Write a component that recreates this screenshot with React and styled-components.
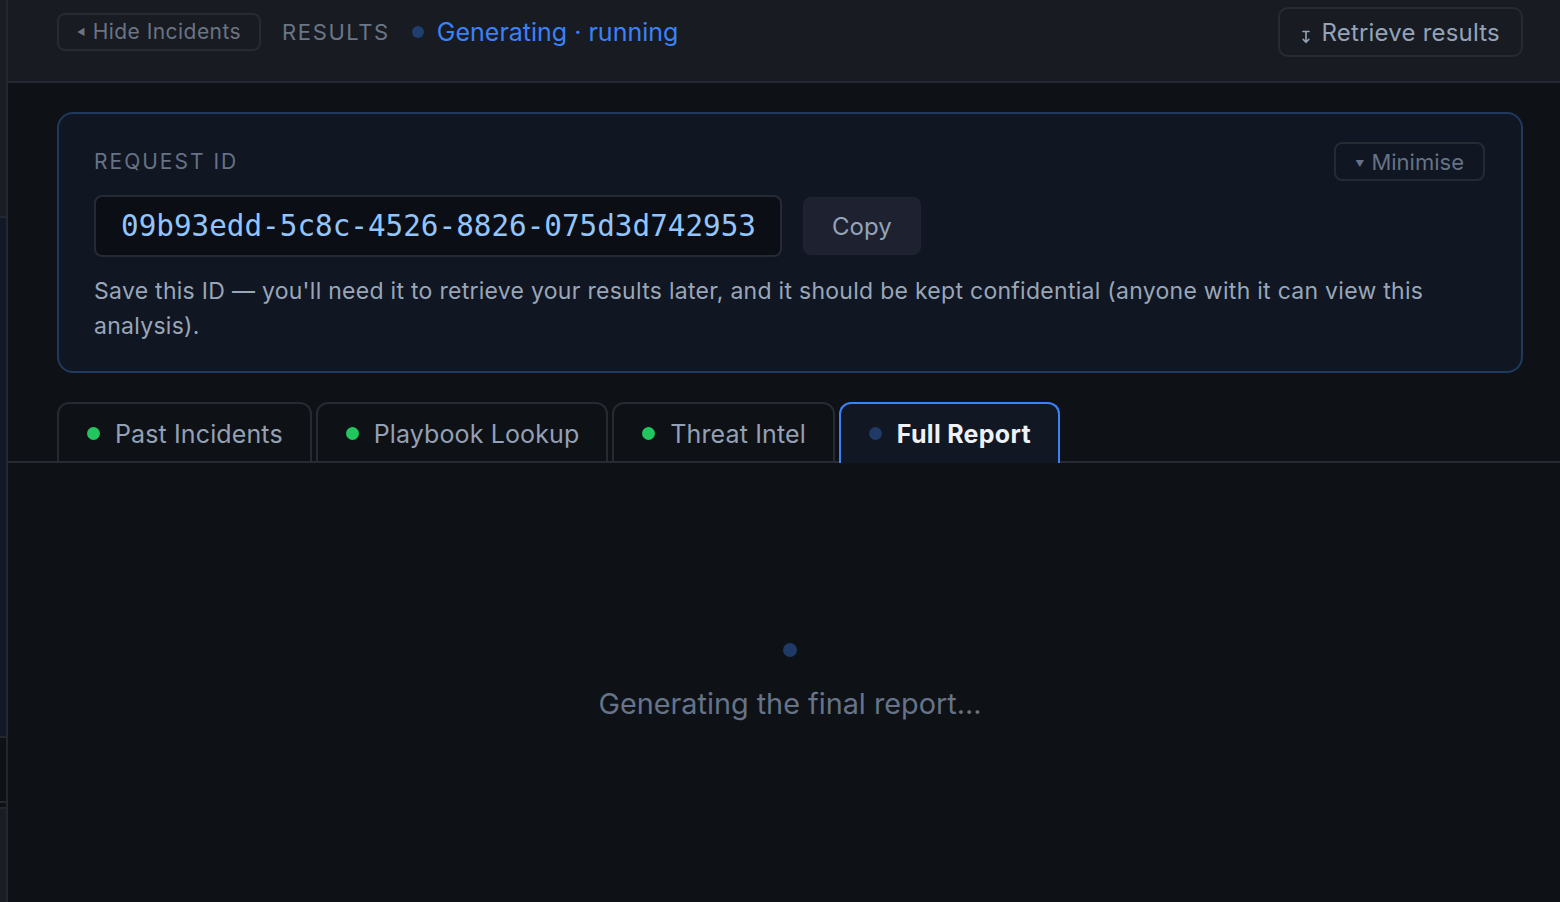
import React from 'react';
import styled, { createGlobalStyle } from 'styled-components';

const Global = createGlobalStyle`
    html, body {
        margin: 0;
        padding: 0;
        background: #0e1116;
        font-family: Inter, "Noto Sans", "Liberation Sans", sans-serif;
        -webkit-font-smoothing: antialiased;
    }
    * {
        box-sizing: border-box;
    }
`;

const Page = styled.div`
    display: flex;
    width: 1560px;
    height: 902px;
    overflow: hidden;
    background: #0e1116;
`;

const SideStrip = styled.div`
    width: 8px;
    flex-shrink: 0;
    display: flex;
    flex-direction: column;
    border-right: 2px solid #23272f;
`;

const StripBlock = styled.div`
    height: ${(p) => (p.$h ? `${p.$h}px` : 'auto')};
    flex: ${(p) => (p.$grow ? 1 : 'none')};
    background: ${(p) => p.$bg};
    border-bottom: ${(p) => (p.$line ? '2px solid #23272f' : 'none')};
`;

const Main = styled.div`
    flex: 1;
    display: flex;
    flex-direction: column;
`;

const Header = styled.header`
    height: 83px;
    display: flex;
    align-items: flex-start;
    padding: 7px 37px 0 49px;
    background: #181b22;
    border-bottom: 2px solid #262a32;
`;

const HeaderLeft = styled.div`
    display: flex;
    align-items: center;
    height: 49px;
    gap: 21px;
    flex: 1;
`;

const GhostButton = styled.button`
    display: inline-flex;
    align-items: center;
    gap: ${(p) => p.$gap || 8}px;
    height: ${(p) => p.$h}px;
    padding: 0 ${(p) => p.$px}px;
    background: transparent;
    border: 2px solid #262a33;
    border-radius: ${(p) => p.$r || 8}px;
    color: ${(p) => p.$color || '#6b7482'};
    font-family: inherit;
    font-size: ${(p) => p.$fs}px;
    letter-spacing: ${(p) => p.$ls || 0}px;
    cursor: pointer;
`;

const Caret = styled.span`
    font-size: ${(p) => p.$fs || 10}px;
    line-height: 1;
    margin-top: ${(p) => p.$dy || 0}px;
`;

const RetrieveIcon = styled.svg`
    width: 10px;
    height: 14px;
    margin-top: 9px;
    flex-shrink: 0;
`;

const ResultsLabel = styled.span`
    font-size: 22px;
    letter-spacing: 1.6px;
    color: #6b7686;
`;

const Status = styled.div`
    display: flex;
    align-items: center;
    gap: 13px;
    margin-left: 1px;
    color: #3b82f6;
    font-size: 25px;
`;

const Dot = styled.span`
    width: ${(p) => p.$size || 12}px;
    height: ${(p) => p.$size || 12}px;
    border-radius: 50%;
    background: ${(p) => p.$color};
    flex-shrink: 0;
`;

const Body = styled.div`
    flex: 1;
    display: flex;
    flex-direction: column;
    padding-top: 29px;
`;

const Card = styled.section`
    margin: 0 37px 0 49px;
    padding: 28px 36px 27px 35px;
    background: #101622;
    border: 2px solid #1f3a5e;
    border-radius: 16px;
`;

const CardTop = styled.div`
    display: flex;
    align-items: center;
    justify-content: space-between;
`;

const FieldLabel = styled.span`
    font-size: 21px;
    letter-spacing: 2px;
    color: #667285;
`;

const IdRow = styled.div`
    display: flex;
    align-items: center;
    gap: 21px;
    margin-top: 14px;
`;

const IdBox = styled.div`
    height: 62px;
    display: flex;
    align-items: center;
    padding: 0 24px 0 25px;
    background: #0b0e14;
    border: 2px solid #262a33;
    border-radius: 8px;
    font-family: "DejaVu Sans Mono", "Liberation Mono", monospace;
    font-size: 29.3px;
    color: #93c5fd;
`;

const CopyButton = styled.button`
    height: 58px;
    padding: 0 27px;
    background: #1d2130;
    border: 2px solid #1f2331;
    border-radius: 8px;
    color: #94a3b8;
    font-family: inherit;
    font-size: 24px;
    cursor: pointer;
`;

const Note = styled.p`
    margin: 17px 0 0;
    font-size: 23px;
    line-height: 35px;
    letter-spacing: 0.28px;
    color: #9aa6b8;
`;

const Tabs = styled.div`
    display: flex;
    gap: 4px;
    margin-top: 29px;
    padding: 0 37px 0 49px;
    border-bottom: 2px solid #262a32;
`;

const Tab = styled.button`
    height: 61px;
    display: flex;
    align-items: center;
    gap: 15px;
    padding: 0 27px 0 28px;
    margin-bottom: -2px;
    background: ${(p) => (p.$active ? '#111723' : 'transparent')};
    border: 2px solid ${(p) => (p.$active ? '#3b82f6' : '#262a32')};
    border-bottom: none;
    border-radius: 12px 12px 0 0;
    color: ${(p) => (p.$active ? '#eef1f6' : '#94a0b4')};
    font-family: inherit;
    font-size: 25px;
    font-weight: ${(p) => (p.$active ? 700 : 400)};
    letter-spacing: ${(p) => (p.$active ? 0.3 : 0.12)}px;
    cursor: pointer;
`;

const Pane = styled.div`
    flex: 1;
    display: flex;
    flex-direction: column;
    align-items: center;
    padding: 180px 37px 0 49px;
`;

const PaneText = styled.p`
    margin: 29px 0 0;
    font-size: 28.8px;
    color: #667388;
`;

const tabs = [
    { label: 'Past Incidents', done: true },
    { label: 'Playbook Lookup', done: true },
    { label: 'Threat Intel', done: true },
    { label: 'Full Report', done: false, active: true },
];

export default function App() {
    return (
        <Page>
            <Global />
            <SideStrip>
                <StripBlock $h={218} $bg="#1a1d24" $line />
                <StripBlock $h={520} $bg="#111827" $line />
                <StripBlock $h={65} $bg="#0f1115" $line />
                <StripBlock $h={6} $bg="#0f1115" $line />
                <StripBlock $grow $bg="#1a1d24" />
            </SideStrip>
            <Main>
                <Header>
                    <HeaderLeft>
                        <GhostButton $h={38} $px={18} $fs={21} $ls={0.45} $gap={7} $color="#6b7482">
                            <Caret $fs={9}>◀</Caret>
                            Hide Incidents
                        </GhostButton>
                        <ResultsLabel>RESULTS</ResultsLabel>
                        <Status>
                            <Dot $color="#1f3d6e" />
                            Generating · running
                        </Status>
                    </HeaderLeft>
                    <GhostButton $h={50} $px={21} $fs={24} $ls={0.2} $gap={10} $r={10} $color="#94a3b8">
                        <RetrieveIcon viewBox="0 0 10 14" fill="none" stroke="#94a3b8" strokeWidth="1.6" strokeLinecap="round" strokeLinejoin="round">
                            <path d="M2 1.5h6M5 1.5v10.5M2.2 9.4L5 12.3l2.8-2.9" />
                        </RetrieveIcon>
                        Retrieve results
                    </GhostButton>
                </Header>
                <Body>
                    <Card>
                        <CardTop>
                            <FieldLabel>REQUEST ID</FieldLabel>
                            <GhostButton $h={39} $px={19} $fs={22} $gap={7} $color="#667285">
                                <Caret $fs={9} $dy={3}>▼</Caret>
                                Minimise
                            </GhostButton>
                        </CardTop>
                        <IdRow>
                            <IdBox>09b93edd-5c8c-4526-8826-075d3d742953</IdBox>
                            <CopyButton>Copy</CopyButton>
                        </IdRow>
                        <Note>
                            Save this ID — you'll need it to retrieve your results later, and it should be kept
                            confidential (anyone with it can view this analysis).
                        </Note>
                    </Card>
                    <Tabs>
                        {tabs.map((t) => (
                            <Tab key={t.label} $active={t.active}>
                                <Dot $size={13} $color={t.done ? '#22c55e' : '#1f3a66'} />
                                {t.label}
                            </Tab>
                        ))}
                    </Tabs>
                    <Pane>
                        <Dot $size={14} $color="#1f3a66" />
                        <PaneText>Generating the final report...</PaneText>
                    </Pane>
                </Body>
            </Main>
        </Page>
    );
}
